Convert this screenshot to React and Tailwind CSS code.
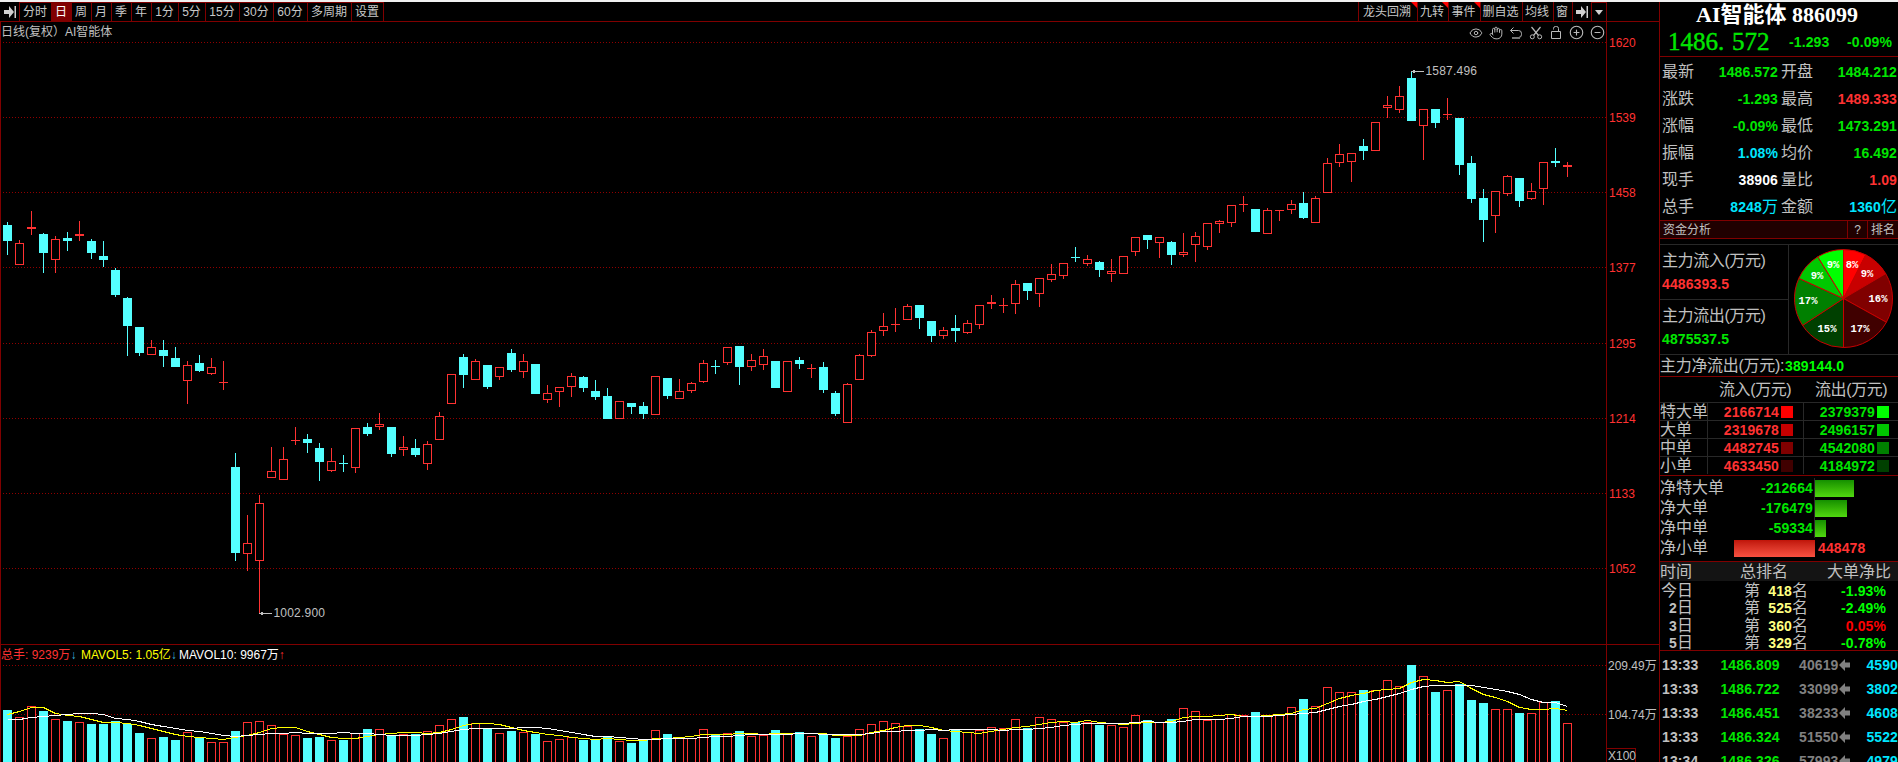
import React from "react";
import { Eye, Hand, CirclePlus, CircleMinus } from "lucide-react";

const UP = "#ff3232";
const DOWN = "#54ffff";
const FRAME = "#800000";

// kind, high, body top, body bottom, low, volume top
const candles = [
  ["d", 222, 225, 241, 255, 710], ["u", 240, 243, 265, 265, 717],
  ["u", 211, 227, 229, 235, 706], ["d", 233, 234, 253, 273, 711],
  ["u", 236, 239, 260, 273, 719], ["d", 232, 238, 241, 251, 721],
  ["u", 221, 234, 236, 241, 722], ["d", 239, 241, 253, 259, 724],
  ["d", 241, 256, 260, 267, 724], ["d", 268, 270, 295, 297, 721],
  ["d", 297, 298, 326, 356, 724], ["d", 327, 327, 353, 356, 733],
  ["u", 340, 347, 355, 355, 738], ["d", 340, 350, 356, 367, 737],
  ["d", 347, 358, 367, 367, 740], ["u", 361, 365, 381, 404, 732],
  ["d", 355, 363, 371, 372, 737], ["u", 358, 367, 374, 375, 742],
  ["u", 361, 382, 383, 390, 742], ["d", 453, 467, 553, 561, 731],
  ["u", 515, 543, 554, 571, 722], ["u", 495, 503, 561, 613, 721],
  ["u", 447, 471, 478, 478, 725], ["u", 447, 459, 480, 480, 734],
  ["u", 427, 440, 441, 445, 735], ["d", 434, 439, 443, 453, 738],
  ["d", 443, 448, 462, 481, 737], ["u", 448, 461, 471, 472, 740],
  ["d", 455, 463, 464, 472, 740], ["u", 428, 428, 468, 473, 733],
  ["d", 423, 427, 434, 436, 729], ["u", 413, 424, 427, 430, 729],
  ["d", 427, 427, 454, 457, 735], ["u", 436, 447, 450, 456, 734],
  ["d", 439, 448, 455, 457, 734], ["u", 441, 444, 464, 470, 731],
  ["u", 412, 416, 440, 440, 725], ["u", 374, 374, 404, 404, 719],
  ["d", 354, 357, 375, 388, 717], ["u", 359, 361, 380, 380, 723],
  ["d", 365, 365, 387, 389, 729], ["u", 367, 367, 377, 380, 733],
  ["d", 349, 353, 370, 372, 731], ["u", 354, 361, 372, 378, 732],
  ["d", 364, 364, 394, 394, 734], ["u", 385, 393, 400, 403, 741],
  ["u", 387, 387, 392, 407, 739], ["u", 373, 376, 387, 397, 737],
  ["d", 376, 377, 388, 392, 740], ["d", 380, 391, 397, 400, 739],
  ["d", 388, 396, 419, 419, 737], ["u", 401, 401, 419, 419, 741],
  ["d", 403, 403, 407, 414, 743], ["d", 402, 406, 414, 419, 740],
  ["u", 376, 376, 415, 415, 730], ["d", 378, 378, 396, 399, 734],
  ["u", 379, 391, 399, 399, 737], ["u", 382, 383, 391, 393, 738],
  ["u", 360, 363, 382, 383, 729], ["d", 360, 366, 367, 374, 734],
  ["u", 347, 347, 363, 365, 733], ["d", 346, 346, 367, 385, 731],
  ["u", 354, 360, 367, 371, 736], ["u", 349, 356, 365, 370, 735],
  ["d", 361, 361, 388, 388, 730], ["u", 361, 361, 392, 392, 734],
  ["d", 357, 360, 364, 369, 732], ["u", 364, 368, 369, 378, 736],
  ["d", 362, 367, 390, 393, 734], ["d", 391, 393, 414, 416, 738],
  ["u", 383, 384, 423, 423, 736], ["u", 354, 355, 380, 380, 729],
  ["u", 330, 332, 356, 357, 724], ["u", 313, 326, 331, 336, 721],
  ["u", 308, 324, 325, 332, 723], ["u", 304, 306, 320, 320, 726],
  ["d", 305, 305, 318, 329, 729], ["d", 321, 321, 336, 342, 734],
  ["u", 327, 330, 336, 339, 738], ["d", 315, 328, 331, 342, 729],
  ["u", 320, 323, 333, 334, 732], ["u", 305, 305, 325, 329, 730],
  ["u", 295, 302, 304, 309, 727], ["u", 298, 305, 306, 313, 728],
  ["u", 280, 284, 304, 314, 719], ["d", 283, 283, 291, 300, 728],
  ["u", 278, 278, 294, 307, 717], ["u", 264, 274, 280, 282, 719],
  ["u", 263, 263, 276, 279, 722], ["d", 247, 257, 258, 262, 722],
  ["u", 255, 259, 264, 266, 722], ["d", 261, 262, 270, 277, 725],
  ["u", 259, 271, 274, 282, 725], ["u", 256, 256, 274, 274, 727],
  ["u", 237, 237, 252, 256, 715], ["d", 235, 235, 240, 249, 720],
  ["u", 237, 237, 243, 258, 722], ["d", 241, 242, 255, 265, 719],
  ["u", 233, 252, 255, 257, 708], ["u", 232, 236, 245, 262, 711],
  ["u", 223, 223, 247, 250, 720], ["u", 220, 221, 224, 233, 719],
  ["u", 205, 205, 223, 227, 714], ["u", 196, 204, 205, 212, 715],
  ["d", 209, 209, 232, 232, 712], ["u", 208, 210, 234, 234, 715],
  ["u", 210, 210, 211, 221, 714], ["u", 200, 204, 210, 214, 707],
  ["d", 192, 203, 218, 219, 699], ["u", 196, 198, 223, 223, 706],
  ["u", 158, 163, 193, 193, 687], ["u", 144, 154, 163, 167, 692],
  ["u", 153, 153, 162, 182, 692], ["d", 139, 146, 151, 160, 690],
  ["u", 122, 122, 151, 151, 690], ["u", 96, 105, 108, 118, 680],
  ["u", 86, 96, 110, 113, 686], ["d", 71, 78, 121, 121, 665],
  ["u", 109, 109, 126, 160, 676], ["d", 109, 109, 123, 128, 692],
  ["u", 98, 114, 115, 120, 690], ["d", 118, 118, 165, 175, 684],
  ["d", 156, 163, 199, 203, 700], ["d", 189, 198, 220, 242, 703],
  ["u", 191, 191, 216, 233, 709], ["u", 175, 176, 194, 196, 709],
  ["d", 178, 178, 201, 207, 713], ["u", 183, 191, 199, 200, 713],
  ["u", 162, 162, 189, 205, 702], ["d", 148, 161, 163, 167, 701],
  ["u", 162, 165, 167, 177, 723],
];

// Moving average of the volume tops, with the leading values given
const movingAverage = (size, lead) =>
  candles
    .map((_, i) => {
      const y =
        i < lead.length
          ? lead[i]
          : candles
              .slice(i - size + 1, i + 1)
              .reduce((sum, c) => sum + c[5], 0) / size;
      return `${7.5 + i * 12},${Math.round(y) + 0.5}`;
    })
    .join(" ");

const ma5 = movingAverage(5, [714, 711, 707, 707]);
const ma10 = movingAverage(10, [719, 719, 717, 716, 715, 714, 713, 713, 714]);

const priceGrid = [
  [42, "1620"],
  [117, "1539"],
  [192, "1458"],
  [267, "1377"],
  [343, "1295"],
  [418, "1214"],
  [493, "1133"],
  [568, "1052"],
];

const periods = [
  ["分时", "w-[32px]"],
  ["日", "w-[20px]"],
  ["周", "w-[20px]"],
  ["月", "w-[20px]"],
  ["季", "w-[20px]"],
  ["年", "w-[20px]"],
  ["1分", "w-[27px]"],
  ["5分", "w-[27px]"],
  ["15分", "w-[34px]"],
  ["30分", "w-[34px]"],
  ["60分", "w-[34px]"],
  ["多周期", "w-[44px]"],
  ["设置", "w-[32px]"],
];

const tools = [
  ["龙头回溯", "w-[59px]", true],
  ["九转", "w-[31px]", true],
  ["事件", "w-[32px]", true],
  ["删自选", "w-[42px]", false],
  ["均线", "w-[31px]", false],
  ["窗", "w-[19px]", false],
];

const ArrowEnd = () => (
  <svg width="12" height="12" viewBox="0 0 12 12" fill="#d0d0d0">
    <path d="M0 4h5V0l5 6-5 6V8H0z" />
    <rect x="10.5" width="1.5" height="12" />
  </svg>
);

const Toolbar = () => (
  <div className="flex h-5 justify-between border-b border-[#800000] text-[12px] leading-none text-[#c8c8c8]">
    <div className="flex">
      <div className="flex w-5 items-center justify-center border-r border-[#800000]">
        <ArrowEnd />
      </div>
      {periods.map(([label, width]) => (
        <div
          key={label}
          className={`flex items-center justify-center whitespace-nowrap border-t border-r border-[#800000] pr-px ${width} ${
            label === "日" ? "bg-[#800000] text-white" : ""
          }`}
        >
          {label}
        </div>
      ))}
    </div>
    <div className="mr-[52px] flex">
      {tools.map(([label, width, flagged]) => (
        <div
          key={label}
          className={`relative flex items-center justify-center whitespace-nowrap border-l border-[#800000] pr-0.5 ${width}`}
        >
          {label}
          {flagged && (
            <svg className="absolute top-0 right-0" width="6" height="6">
              <path d="M0 0h6v6z" fill="#ff0000" />
            </svg>
          )}
        </div>
      ))}
      <div className="flex w-[19px] items-center justify-center border-l border-[#800000]">
        <ArrowEnd />
      </div>
      <div className="flex w-4 items-center justify-center border-t border-x border-[#800000]">
        <svg width="8" height="5">
          <path d="M0 0h8L4 5z" fill="#d0d0d0" />
        </svg>
      </div>
    </div>
  </div>
);

const Candle = ({ data, index }) => {
  const [kind, high, top, bottom, low, vol] = data;
  const x = 3 + index * 12;
  const color = kind === "u" ? UP : DOWN;
  const hollow = kind === "u" && bottom - top > 2;
  return (
    <g>
      {top > high && (
        <rect x={x + 4} y={high} width="1" height={top - high} fill={color} />
      )}
      {low > bottom && (
        <rect x={x + 4} y={bottom} width="1" height={low - bottom} fill={color} />
      )}
      {hollow ? (
        <rect
          x={x + 0.5}
          y={top + 0.5}
          width="8"
          height={bottom - top - 1}
          fill="#000"
          stroke={color}
        />
      ) : (
        <rect x={x} y={top} width="9" height={bottom - top} fill={color} />
      )}
      {kind === "u" ? (
        <rect
          x={x + 0.5}
          y={vol + 0.5}
          width="8"
          height={770 - vol}
          fill="#000"
          stroke={color}
        />
      ) : (
        <rect x={x} y={vol} width="9" height={770 - vol} fill={color} />
      )}
    </g>
  );
};

const Chart = () => (
  <svg
    className="block"
    width="1659"
    height="740"
    viewBox="0 22 1659 740"
    fontSize="12"
    shapeRendering="crispEdges"
  >
    {[...priceGrid.map(([y]) => y), 665, 714].map((y) => (
      <line
        key={y}
        x1="3"
        x2="1606"
        y1={y + 0.5}
        y2={y + 0.5}
        stroke="#900000"
        strokeDasharray="1 2"
      />
    ))}
    {candles.map((c, i) => (
      <Candle key={i} data={c} index={i} />
    ))}
    <polyline points={ma5} fill="none" stroke="#ffff00" />
    <polyline points={ma10} fill="none" stroke="#ffffff" />

    <rect x="0" y="22" width="1" height="740" fill={FRAME} />
    <rect x="1606" y="22" width="1" height="740" fill={FRAME} />
    <rect x="0" y="644" width="1659" height="1" fill={FRAME} />
    <rect x="1606.5" y="748.5" width="29" height="20" fill="none" stroke={FRAME} />

    {priceGrid.map(([y, label]) => (
      <text key={label} x="1609" y={y + 5} fill={UP}>
        {label}
      </text>
    ))}
    <g fill="#c0c0c0">
      <text x="1608" y="670">209.49万</text>
      <text x="1608" y="719">104.74万</text>
      <text x="1608" y="760">X100</text>
      <text x="1425.5" y="75" letterSpacing="0.2">1587.496</text>
      <text x="273.5" y="617" letterSpacing="0.2">1002.900</text>
      <path d="M1412 71h12v1h-12zM1411 71.5l4-2v4z" />
      <path d="M261 613h11v1h-11zM259 613.5l4-2v4z" />
    </g>
  </svg>
);

const ChartIcons = () => (
  <div className="absolute top-[3px] right-[54px] flex items-center gap-1.5 text-[#b8b8b8]">
    <Eye size={14} strokeWidth={1.7} />
    <Hand size={14} strokeWidth={1.7} />
    <svg width="14" height="14" viewBox="0 0 14 14" fill="none" stroke="currentColor">
      <path d="M4.5 1.5L1.5 4.5l3 3M1.5 4.5h8a3 3 0 0 1 3 3v1a3 3 0 0 1-3 3" />
      <path d="M3 12h8" stroke="#777" strokeWidth="2" />
    </svg>
    <svg width="14" height="14" viewBox="0 0 14 14" fill="none" stroke="currentColor">
      <path d="M2.5 1L9.5 9.5M11.5 1L4.5 9.5" strokeWidth="1.2" />
      <circle cx="3.3" cy="10.8" r="2" />
      <circle cx="10.7" cy="10.8" r="2" />
    </svg>
    <svg width="14" height="14" viewBox="0 0 14 14" fill="none" stroke="currentColor">
      <path d="M2.5 5.5h9v7h-9zM4.5 3.5v-1a2 2 0 0 1 2-2h1a2 2 0 0 1 2 2v3" />
    </svg>
    <CirclePlus size={15} strokeWidth={1.8} />
    <CircleMinus size={15} strokeWidth={1.8} />
  </div>
);

const VolumeLegend = () => (
  <div className="absolute top-[626px] left-px flex text-[12px] leading-[14px] whitespace-nowrap">
    <div className="w-20 text-[#ff3232]">
      总手: 9239万<span className="font-bold text-[#3cb4dc]">↓</span>
    </div>
    <div className="w-[98px] text-[#ffff00]">
      MAVOL5: 1.05亿<span className="font-bold text-[#3cb4dc]">↓</span>
    </div>
    <div className="text-white">
      MAVOL10: 9967万<span className="font-bold text-[#ff3232]">↑</span>
    </div>
  </div>
);

const quotes = [
  ["最新", "1486.572", "text-[#00e600]", "开盘", "1484.212", "text-[#00e600]"],
  ["涨跌", "-1.293", "text-[#00e600]", "最高", "1489.333", "text-[#ff3232]"],
  ["涨幅", "-0.09%", "text-[#00e600]", "最低", "1473.291", "text-[#00e600]"],
  ["振幅", "1.08%", "text-[#00e6ff]", "均价", "16.492", "text-[#00e600]"],
  ["现手", "38906", "text-white", "量比", "1.09", "text-[#ff3232]"],
  ["总手", "8248万", "text-[#00e6ff]", "金额", "1360亿", "text-[#00e6ff]"],
];

// Trailing units are set larger and lighter than the digits
const Num = ({ value, className }) => {
  const unit = /[万亿]$/.test(value) ? value.slice(-1) : "";
  return (
    <span className={`text-[14px] font-bold tracking-[0.1px] ${className}`}>
      {unit ? value.slice(0, -1) : value}
      {unit && <span className="text-[16px] font-normal">{unit}</span>}
    </span>
  );
};

const Quotes = () => (
  <div className="flex h-[164px] flex-col border-b border-[#800000] pt-px">
    {quotes.map(([l1, v1, c1, l2, v2, c2]) => (
      <div key={l1} className="flex h-[27px] items-center pl-0.5">
        <span className="w-8">{l1}</span>
        <Num value={v1} className={`w-[84px] text-right ${c1}`} />
        <span className="ml-[3px] w-8">{l2}</span>
        <Num value={v2} className={`w-[84px] text-right ${c2}`} />
      </div>
    ))}
  </div>
);

const slices = [
  [0, 27, "#ff0000", "8%", 1852, 264],
  [27, 59.5, "#c80000", "9%", 1867, 273],
  [59.5, 119, "#800000", "16%", 1878, 298],
  [119, 180, "#400000", "17%", 1860, 328],
  [180, 236.7, "#004000", "15%", 1827, 328],
  [236.7, 294.3, "#008000", "17%", 1808, 300],
  [294.3, 328.3, "#00c800", "9%", 1817, 275],
  [328.3, 360, "#00ff00", "9%", 1833, 264],
];

const CX = 1843.5;
const CY = 298.5;
const R = 49;

const point = (deg) => {
  const a = (deg * Math.PI) / 180;
  return `${(CX + R * Math.sin(a)).toFixed(2)} ${(CY - R * Math.cos(a)).toFixed(2)}`;
};

const Pie = () => (
  <svg width="109" height="110" viewBox="1789 245 109 110">
    {slices.map(([from, to, fill]) => (
      <path
        key={from}
        d={`M${CX} ${CY}L${point(from)}A${R} ${R} 0 0 1 ${point(to)}Z`}
        fill={fill}
        stroke="#c80000"
      />
    ))}
    <g
      className="font-['Liberation_Mono',monospace] font-bold"
      fill="#fff"
      fontSize="10.5"
      textAnchor="middle"
    >
      {slices.map(([from, , , label, x, y]) => (
        <text key={from} x={x} y={y + 4}>
          {label}
        </text>
      ))}
    </g>
  </svg>
);

const orders = [
  ["特大单", "2166714", "bg-[#ff0000]", "2379379", "bg-[#00ff00]"],
  ["大单", "2319678", "bg-[#c80000]", "2496157", "bg-[#00c800]"],
  ["中单", "4482745", "bg-[#800000]", "4542080", "bg-[#008000]"],
  ["小单", "4633450", "bg-[#400000]", "4184972", "bg-[#004000]"],
];

const Flow = () => (
  <>
    <div className="flex h-[18px] items-center border-b border-[#800000] bg-[#200000] text-[12px]">
      <span className="flex-1 pl-[3px]">资金分析</span>
      <span className="flex h-full w-[21px] items-center justify-center border-x border-[#800000]">
        ?
      </span>
      <span className="w-[30px] pl-[3px] whitespace-nowrap">排名</span>
    </div>
    <div className="mt-[5px] flex h-[111px] border-y border-[#282828]">
      <div className="w-[129px] border-r border-[#282828]">
        <div className="flex h-[55px] flex-col justify-center gap-[7px] border-b border-[#282828] pl-0.5">
          <span className="tracking-[-0.4px]">主力流入(万元)</span>
          <Num value="4486393.5" className="text-[#ff3232]" />
        </div>
        <div className="flex h-[54px] flex-col justify-center gap-[7px] pl-0.5">
          <span className="tracking-[-0.4px]">主力流出(万元)</span>
          <Num value="4875537.5" className="text-[#00e600]" />
        </div>
      </div>
      <Pie />
    </div>
    <div className="flex h-[22px] items-center border-b border-[#800000]">
      <span className="w-[125px] tracking-[-0.3px] whitespace-nowrap">
        主力净流出(万元):
      </span>
      <Num value="389144.0" className="text-[#00ff00]" />
    </div>
    <div className="flex h-[25px] items-center pl-[59px]">
      <span className="w-24 tracking-[-0.4px]">流入(万元)</span>
      <span className="tracking-[-0.4px] whitespace-nowrap">流出(万元)</span>
    </div>
    <div className="h-[74px] border-b border-[#800000]">
      {orders.map(([label, inflow, inColor, outflow, outColor]) => (
        <div key={label} className="flex h-[18px] border-t border-[#282828]">
          <span className="flex w-12 items-center border-r border-[#282828] whitespace-nowrap">
            {label}
          </span>
          <span className="flex w-24 items-center justify-end gap-0.5 border-r border-[#282828] pr-[10px]">
            <Num value={inflow} className="text-[#ff3232]" />
            <span className={`h-3 w-3 ${inColor}`} />
          </span>
          <span className="flex w-[85px] items-center justify-end gap-0.5">
            <Num value={outflow} className="text-[#00e600]" />
            <span className={`h-3 w-3 ${outColor}`} />
          </span>
        </div>
      ))}
    </div>
  </>
);

const nets = [
  ["净特大单", "-212664", "w-[39px]"],
  ["净大单", "-176479", "w-8"],
  ["净中单", "-59334", "w-[11px]"],
];

const NetOrders = () => (
  <div className="h-[86px] border-b border-[#800000] pt-0.5">
    {nets.map(([label, value, width]) => (
      <div key={label} className="flex h-5 items-center">
        <span className="w-16">{label}</span>
        <Num value={value} className="w-[89px] text-right text-[#00e600]" />
        <span className="ml-px flex h-full items-center border-l border-[#282828]">
          <span className={`h-[17px] bg-linear-to-b from-[#149000] to-[#50d810] ${width}`} />
        </span>
      </div>
    ))}
    <div className="flex h-5 items-center">
      <span className="w-[74px]">净小单</span>
      <span className="mr-[3px] h-[17px] w-[81px] bg-linear-to-b from-[#c01408] to-[#f85040]" />
      <Num value="448478" className="text-[#ff3232]" />
    </div>
  </div>
);

const ranks = [
  ["今", "418", "-1.93%", "text-[#00ff00]"],
  ["2", "525", "-2.49%", "text-[#00ff00]"],
  ["3", "360", "0.05%", "text-[#ff0000]"],
  ["5", "329", "-0.78%", "text-[#00ff00]"],
];

const Ranks = () => (
  <div className="h-[89px] border-b border-[#800000]">
    <div className="mb-px flex h-[19px] items-center bg-[#141414] whitespace-nowrap">
      <span className="w-20">时间</span>
      <span className="w-[87px]">总排名</span>
      <span>大单净比</span>
    </div>
    {ranks.map(([day, rank, pct, color]) => (
      <div key={day} className="flex h-[17.5px] items-center">
        <span className="flex w-[84px] items-center">
          <span className="w-[17px] text-right">
            {day === "今" ? day : <Num value={day} className="" />}
          </span>
          日
        </span>
        <span>第</span>
        <Num value={rank} className="w-8 text-right text-[#ffff80]" />
        <span>名</span>
        <Num value={pct} className={`w-[78px] text-right ${color}`} />
      </div>
    ))}
  </div>
);

const ticks = [
  ["13:33", "1486.809", "40619", "4590"],
  ["13:33", "1486.722", "33099", "3802"],
  ["13:33", "1486.451", "38233", "4608"],
  ["13:33", "1486.324", "51550", "5522"],
  ["13:34", "1486.326", "57993", "4979"],
];

const Ticks = () => (
  <div className="pt-0.5">
    {ticks.map(([time, price, volume, count]) => (
      <div key={price} className="flex h-6 items-center pl-0.5">
        <Num value={time} className="w-[59px]" />
        <Num value={price} className="w-[60px] text-[#00e600]" />
        <Num value={volume} className="w-[59px] text-right text-[#808080]" />
        <svg className="mx-px shrink-0" width="11" height="12" viewBox="0 0 11 12">
          <path d="M0 6l6-6v3.5h5v5H6V12z" fill="#808080" />
        </svg>
        <Num value={count} className="ml-[15px] text-[#00e6ff]" />
      </div>
    ))}
  </div>
);

const SidePanel = () => (
  <div className="w-[239px] overflow-hidden border-l border-[#800000] text-[16px] leading-4 text-[#c0c0c0]">
    <div className="flex h-[25px] items-center pl-9 font-['Liberation_Serif','Noto_Sans_CJK_SC',serif] text-[22px] font-bold whitespace-pre text-white">
      AI智能体 886099
    </div>
    <div className="flex h-[30px] items-center border-b border-[#800000] pl-2 text-[#00e600]">
      <span className="w-[121px] font-['Liberation_Serif',serif] text-[25px] [-webkit-text-stroke:0.4px]">
        1486<span className="inline-block w-[14px]">.</span>572
      </span>
      <Num value="-1.293" className="w-[58px]" />
      <Num value="-0.09%" className="" />
    </div>
    <Quotes />
    <Flow />
    <NetOrders />
    <Ranks />
    <Ticks />
  </div>
);

export default function App() {
  return (
    <div className="h-[762px] w-[1898px] overflow-hidden border-t-2 border-[#f0f0f0] bg-black font-['Liberation_Sans','Noto_Sans_CJK_SC',sans-serif]">
      <div className="flex">
        <div className="w-[1659px]">
          <Toolbar />
          <div className="relative">
            <Chart />
            <div className="absolute top-[3px] left-px text-[12px] leading-[14px] whitespace-pre text-[#c0c0c0]">
              日线(复权）AI智能体
            </div>
            <ChartIcons />
            <VolumeLegend />
          </div>
        </div>
        <SidePanel />
      </div>
    </div>
  );
}
